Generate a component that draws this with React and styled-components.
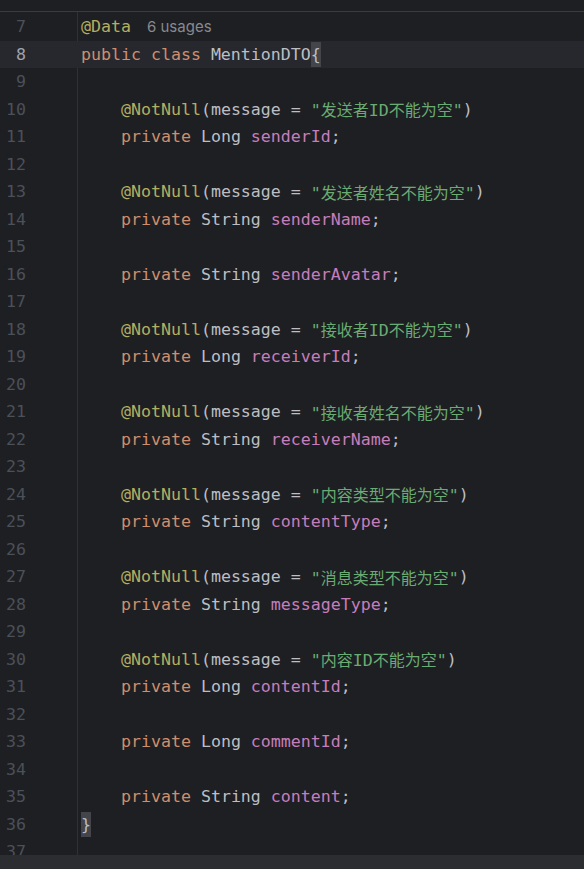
import React from "react";
import styled, { createGlobalStyle } from "styled-components";

const Global = createGlobalStyle`
  html, body { margin: 0; padding: 0; background: #1e1f22; }
  body { width: 584px; height: 869px; overflow: hidden; }
`;

const Frame = styled.div`
  width: 584px;
  height: 869px;
  display: flex;
  flex-direction: column;
  background: #1e1f22;
  overflow: hidden;
`;

const TopStrip = styled.div`
  height: 11px;
  flex: none;
  background: #1e1f22;
  border-bottom: 1px solid #393b40;
`;

const Editor = styled.div`
  flex: 1;
  min-height: 0;
  display: flex;
  flex-direction: column;
  padding-top: 1px;
  overflow: hidden;
  background: linear-gradient(to right, transparent 77px, #2f3135 77px, #2f3135 78px, transparent 78px);
`;

const Row = styled.div`
  height: 27.5px;
  flex: none;
  display: flex;
  align-items: center;
  background: ${(p) => (p.$current ? "#26282e" : "transparent")};
  font-family: "DejaVu Sans Mono", "Liberation Mono", "Noto Sans CJK SC", monospace;
  font-size: 16.6px;
  white-space: pre;
`;

const LineNo = styled.div`
  width: 26px;
  flex: none;
  text-align: right;
  color: ${(p) => (p.$current ? "#a1a3ab" : "#4b5059")};
  margin-right: 55px;
`;

const Code = styled.div`
  color: #bcbec4;
  display: flex;
  align-items: center;
`;

const COLORS = {
  kw: "#cf8e6d",
  ann: "#b3ae60",
  str: "#6aab73",
  field: "#c77dbb",
  txt: "#bcbec4",
};

const Tok = styled.span`
  color: ${(p) => COLORS[p.$t] || "#bcbec4"};
`;

const Cjk = styled.span`
  font-family: "Noto Sans CJK SC", sans-serif;
  font-size: 16px;
`;

const Brace = styled.span`
  background: #43454a;
  color: #bcbec4;
  display: inline-block;
  height: 25px;
  line-height: 25px;
`;

const Hint = styled.span`
  font-family: "Inter", "Noto Sans", sans-serif;
  font-size: 15px;
  color: #868a91;
  margin-left: 16px;
`;

const BottomBar = styled.div`
  height: 14px;
  flex: none;
  background: #2b2d30;
`;

function renderText(text) {
  const parts = text.split(/([\u4e00-\u9fff]+)/);
  return parts.map((p, i) =>
    /[\u4e00-\u9fff]/.test(p) ? <Cjk key={i}>{p}</Cjk> : p
  );
}

const I = "    ";
const notNull = (msg) => [
  ["txt", I],
  ["ann", "@NotNull"],
  ["txt", "(message = "],
  ["str", `"${msg}"`],
  ["txt", ")"],
];
const field = (type, name) => [
  ["txt", I],
  ["kw", "private "],
  ["txt", type + " "],
  ["field", name],
  ["txt", ";"],
];

const lines = [
  { n: 7, toks: [["ann", "@Data"]], hint: "6 usages" },
  {
    n: 8,
    current: true,
    toks: [["kw", "public class "], ["txt", "MentionDTO"], ["brace", "{"]],
  },
  { n: 9, toks: [] },
  { n: 10, toks: notNull("发送者ID不能为空") },
  { n: 11, toks: field("Long", "senderId") },
  { n: 12, toks: [] },
  { n: 13, toks: notNull("发送者姓名不能为空") },
  { n: 14, toks: field("String", "senderName") },
  { n: 15, toks: [] },
  { n: 16, toks: field("String", "senderAvatar") },
  { n: 17, toks: [] },
  { n: 18, toks: notNull("接收者ID不能为空") },
  { n: 19, toks: field("Long", "receiverId") },
  { n: 20, toks: [] },
  { n: 21, toks: notNull("接收者姓名不能为空") },
  { n: 22, toks: field("String", "receiverName") },
  { n: 23, toks: [] },
  { n: 24, toks: notNull("内容类型不能为空") },
  { n: 25, toks: field("String", "contentType") },
  { n: 26, toks: [] },
  { n: 27, toks: notNull("消息类型不能为空") },
  { n: 28, toks: field("String", "messageType") },
  { n: 29, toks: [] },
  { n: 30, toks: notNull("内容ID不能为空") },
  { n: 31, toks: field("Long", "contentId") },
  { n: 32, toks: [] },
  { n: 33, toks: field("Long", "commentId") },
  { n: 34, toks: [] },
  { n: 35, toks: field("String", "content") },
  { n: 36, toks: [["brace", "}"]] },
  { n: 37, toks: [] },
];

export default function App() {
  return (
    <>
      <Global />
      <Frame>
        <TopStrip />
        <Editor>
          {lines.map((l) => (
            <Row key={l.n} $current={l.current}>
              <LineNo $current={l.current}>{l.n}</LineNo>
              <Code>
                {l.toks.map(([t, s], i) =>
                  t === "brace" ? (
                    <Brace key={i}>{s}</Brace>
                  ) : (
                    <Tok key={i} $t={t}>
                      {renderText(s)}
                    </Tok>
                  )
                )}
                {l.hint && <Hint>{l.hint}</Hint>}
              </Code>
            </Row>
          ))}
        </Editor>
        <BottomBar />
      </Frame>
    </>
  );
}
